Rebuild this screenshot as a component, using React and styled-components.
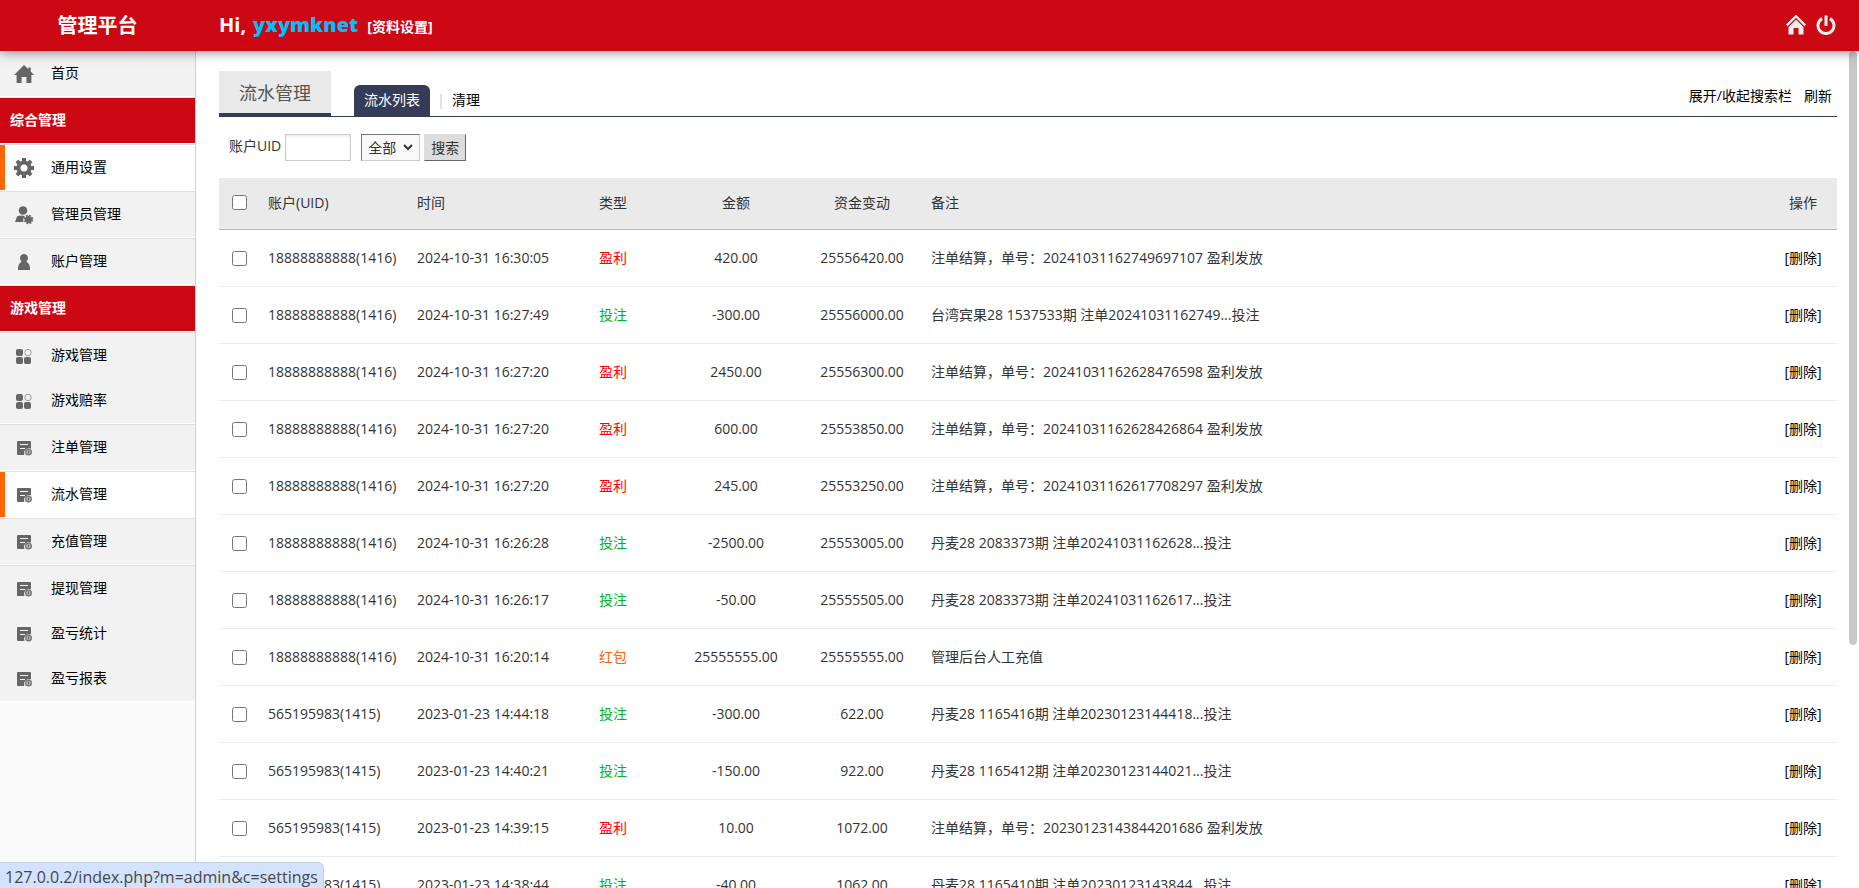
import React, { useState } from 'react';
import styled, { createGlobalStyle, css } from 'styled-components';

const GlobalStyle = createGlobalStyle`
  * {
    box-sizing: border-box;
  }
  body {
    margin: 0;
    background: #fff;
    color: #333;
    font-family: 'Open Sans', 'Noto Sans CJK SC', sans-serif;
    font-size: 14px;
    line-height: 20px;
  }
  a {
    color: #000;
    text-decoration: none;
  }
`;

const StyledPage = styled.div`
  display: flex;
  flex-direction: column;
  height: 100vh;
  overflow: hidden;
`;

const StyledHeader = styled.header`
  position: relative;
  z-index: 10;
  display: flex;
  align-items: center;
  flex-shrink: 0;
  height: 51px;
  padding-right: 23px;
  background: #cb0814;
  box-shadow: 0 0 12px rgba(0, 0, 0, 0.55);
  color: #fff;
  font-weight: bold;
`;

const StyledLogo = styled.div`
  width: 195px;
  font-size: 20px;
  text-align: center;
`;

const StyledGreeting = styled.div`
  display: flex;
  align-items: baseline;
  flex: 1;
  padding-left: 24px;
  font-size: 20px;

  strong {
    margin-left: 7px;
    color: #00bfff;
  }
  a {
    margin-left: 9px;
    color: #fff;
    font-size: 14px;
  }
`;

const StyledTools = styled.div`
  display: flex;
  gap: 10px;
  padding-bottom: 2px;

  a {
    display: block;
    width: 20px;
    height: 20px;
    color: #eee;
  }
`;

const StyledBody = styled.div`
  display: flex;
  flex: 1;
  min-height: 0;
`;

const StyledSidebar = styled.aside`
  flex-shrink: 0;
  width: 196px;
  background: #fafafa;
  border-right: 1px solid #c9d3dc;
`;

const StyledMenu = styled.ul`
  margin: 0;
  padding: 0;
  list-style: none;
`;

const StyledMenuGroup = styled.li`
  background: ${({ $active }) => ($active ? '#fff' : '#f2f2f2')};
  border-top: 1px solid #e0e0e0;
  border-bottom: 1px solid #fff;
  box-shadow: ${({ $active }) => ($active ? 'inset 5px 0 0 #f60' : 'none')};

  &:first-child {
    border-top: 0;
  }
`;

const StyledMenuTitle = styled.div`
  height: 45px;
  padding-left: 10px;
  background: #cb0814;
  color: #fff;
  font-weight: bold;
  line-height: 43px;
`;

const StyledMenuLink = styled.a`
  display: flex;
  align-items: center;
  height: 45px;
  padding-left: 14px;

  svg {
    width: 20px;
    height: 20px;
    margin-right: 17px;
    fill: #666;
  }
  span {
    padding-bottom: 2px;
  }
`;

const StyledMain = styled.main`
  position: relative;
  flex: 1;
  min-width: 0;
  overflow: hidden;
  padding: 20px 22px 0 23px;
`;

const StyledTabBar = styled.div`
  display: flex;
  align-items: flex-end;
  border-bottom: 1px solid #343c58;
`;

const StyledTitle = styled.h1`
  width: 112px;
  height: 45px;
  margin: 0;
  border-bottom: 3px solid #343c58;
  background: #eaeaea;
  color: #555;
  font-size: 18px;
  font-weight: normal;
  line-height: 44px;
  text-align: center;
`;

const StyledTabs = styled.nav`
  display: flex;
  align-items: center;
  flex: 1;
  padding-left: 23px;
`;

const StyledTab = styled.a`
  padding-bottom: 2px;
  line-height: 29px;

  ${({ $current }) =>
    $current
      ? css`
          margin-right: 10px;
          padding-left: 10px;
          padding-right: 10px;
          border-radius: 6px 6px 0 0;
          background: #343c58;
          color: #fff;
        `
      : css`
          &::before {
            content: '';
            display: inline-block;
            width: 2px;
            height: 15px;
            margin-right: 10px;
            background: #e4e0e0;
            vertical-align: middle;
          }
        `}
`;

const StyledActions = styled.div`
  display: flex;
  align-self: center;
  gap: 12px;
  padding: 4px 5px 0 0;
`;

const StyledTextButton = styled.button`
  padding: 0;
  border: 0;
  background: none;
  color: #000;
  font: inherit;
`;

const StyledSearch = styled.form`
  display: flex;
  align-items: center;
  height: 27px;
  margin: 17px 0;
  padding-left: 10px;

  label {
    margin-right: 4px;
    padding-bottom: 4px;
  }
`;

const StyledInput = styled.input`
  width: 66px;
  height: 27px;
  margin-right: 10px;
  border: 1px solid #ccc;
  box-shadow: inset 0 2px 3px #eee;
  font: inherit;
`;

const StyledSelectWrapper = styled.span`
  position: relative;
  display: flex;
  margin-right: 4px;

  svg {
    position: absolute;
    top: 9px;
    right: 7px;
    width: 10px;
    height: 8px;
    pointer-events: none;
  }
`;

const StyledSelect = styled.select`
  appearance: none;
  width: 59px;
  height: 27px;
  padding: 0 6px;
  border: 1px solid;
  border-color: #777 #ccc #ccc #777;
  border-radius: 0;
  background: #f9f9f9;
  color: #333;
  font: inherit;
`;

const StyledSubmit = styled.button`
  width: 42px;
  height: 27px;
  padding: 0;
  border: 1px solid;
  border-color: #ddd #666 #666 #ddd;
  background: #ddd;
  color: #333;
  font: inherit;
`;

const StyledTable = styled.table`
  width: 100%;
  border-collapse: separate;
  border-spacing: 0;
  table-layout: fixed;
`;

const StyledHeadCell = styled.th`
  width: ${({ $width }) => ($width ? `${$width}px` : 'auto')};
  height: 52px;
  padding: 0 10px 2px;
  border-bottom: 1px solid #bbb;
  background: #eaeaea;
  font-weight: normal;
  text-align: ${({ $align }) => $align || 'left'};
`;

const StyledCell = styled.td`
  height: 57px;
  padding: 0 10px;
  border-bottom: 1px solid #ececec;
  color: ${({ $color }) => $color || '#333'};
  text-align: ${({ $align }) => $align || 'left'};
  white-space: nowrap;
`;

const StyledCheckbox = styled.input`
  display: block;
  width: 15px;
  height: 15px;
  margin: 0 0 0 3px;
`;

const StyledScrollThumb = styled.div`
  position: absolute;
  top: 0;
  right: 2px;
  width: 8px;
  height: 71%;
  border-radius: 4px;
  background: #c9c9c9;
`;

const StyledStatus = styled.div`
  position: fixed;
  bottom: 0;
  left: 0;
  z-index: 20;
  height: 26px;
  padding: 0 5px;
  border-top: 1px solid #c8cfdc;
  border-right: 1px solid #c8cfdc;
  border-radius: 0 6px 0 0;
  background: #d3e3fd;
  color: #474747;
  font-size: 16px;
  line-height: 28px;
`;

const icons = {
  home: <path d="M10 1 0 11h2.6v8h5v-6h4.800v6h5v-8H20l-3.300-3.400V3.500h-2.400v1.700z" />,
  gear: (
    <path
      fillRule="evenodd"
      d="M8 0h4v2.700l1.800.8L15.800 1.500 18.500 4.200 16.500 6.200l.8 1.800H20v4h-2.700l-.8 1.800 2 2-2.700 2.700-2-2-1.800.8V20H8v-2.700l-1.800-.8-2 2-2.700-2.700 2-2-.8-1.800H0V8h2.700l.8-1.800-2-2L4.200 1.500l2 2L8 2.700zM10 6.500a3.500 3.500 0 1 0 0 7 3.500 3.500 0 0 0 0-7z"
    />
  ),
  admin: (
    <>
      <circle cx="9" cy="5.500" r="4.300" />
      <path d="M1 17 3 11.500q3-1.500 8-.5-2.500 2-1.500 6z" />
      <circle cx="14.500" cy="14.500" r="3.600" />
      <circle cx="14.500" cy="14.500" r="4" fill="none" stroke="#666" strokeWidth="1.400" strokeDasharray="2 1.140" />
    </>
  ),
  user: (
    <path d="M10 2a4.200 4.200 0 0 1 2.700 7.300Q12 10 13.800 10.800q2 1.200 2.200 5.200v2H4v-2q.2-4 2.200-5.200Q8 10 7.300 9.300A4.200 4.200 0 0 1 10 2z" />
  ),
  blocks: (
    <>
      <rect x="2" y="3" width="7" height="7" rx="2" />
      <rect x="2" y="11" width="7" height="7" rx="2" />
      <rect x="10" y="11" width="7" height="7" rx="2" />
      <circle cx="14" cy="6.500" r="3.200" fill="none" stroke="#999" />
    </>
  ),
  list: (
    <>
      <path
        fillRule="evenodd"
        d="M4 3h12a1 1 0 0 1 1 1v6.500a5 5 0 0 0-6.500 6.500H4a1 1 0 0 1-1-1V4a1 1 0 0 1 1-1zM6 6v1h8V6zM6 10v1h5v-1z"
      />
      <circle cx="14.500" cy="14" r="2.800" fill="#ccc" stroke="#777" strokeWidth="1.400" />
      <path d="M13.800 12.500h1.500v1.700l-.8 1.500h-.7z" />
    </>
  ),
};

const MenuIcon = ({ name }) => (
  <svg viewBox="0 0 20 20" aria-hidden="true">
    {icons[name]}
  </svg>
);

const menu = [
  { links: [['home', '首页']] },
  { title: '综合管理' },
  { links: [['gear', '通用设置']], active: true },
  { links: [['admin', '管理员管理']] },
  { links: [['user', '账户管理']] },
  { title: '游戏管理' },
  { links: [['blocks', '游戏管理'], ['blocks', '游戏赔率']] },
  { links: [['list', '注单管理']] },
  { links: [['list', '流水管理']], active: true },
  { links: [['list', '充值管理']] },
  { links: [['list', '提现管理'], ['list', '盈亏统计'], ['list', '盈亏报表']] },
];

const columns = [
  { label: '账户(UID)', width: 149 },
  { label: '时间', width: 182 },
  { label: '类型', width: 80 },
  { label: '金额', width: 134, align: 'center' },
  { label: '资金变动', width: 118, align: 'center' },
  { label: '备注' },
  { label: '操作', width: 68, align: 'center' },
];

const typeColors = { 盈利: '#f00', 投注: '#00b41e', 红包: '#f60' };

const records = [
  ['18888888888(1416)', '2024-10-31 16:30:05', '盈利', '420.00', '25556420.00', '注单结算，单号：20241031162749697107 盈利发放'],
  ['18888888888(1416)', '2024-10-31 16:27:49', '投注', '-300.00', '25556000.00', '台湾宾果28 1537533期 注单20241031162749...投注'],
  ['18888888888(1416)', '2024-10-31 16:27:20', '盈利', '2450.00', '25556300.00', '注单结算，单号：20241031162628476598 盈利发放'],
  ['18888888888(1416)', '2024-10-31 16:27:20', '盈利', '600.00', '25553850.00', '注单结算，单号：20241031162628426864 盈利发放'],
  ['18888888888(1416)', '2024-10-31 16:27:20', '盈利', '245.00', '25553250.00', '注单结算，单号：20241031162617708297 盈利发放'],
  ['18888888888(1416)', '2024-10-31 16:26:28', '投注', '-2500.00', '25553005.00', '丹麦28 2083373期 注单20241031162628...投注'],
  ['18888888888(1416)', '2024-10-31 16:26:17', '投注', '-50.00', '25555505.00', '丹麦28 2083373期 注单20241031162617...投注'],
  ['18888888888(1416)', '2024-10-31 16:20:14', '红包', '25555555.00', '25555555.00', '管理后台人工充值'],
  ['565195983(1415)', '2023-01-23 14:44:18', '投注', '-300.00', '622.00', '丹麦28 1165416期 注单20230123144418...投注'],
  ['565195983(1415)', '2023-01-23 14:40:21', '投注', '-150.00', '922.00', '丹麦28 1165412期 注单20230123144021...投注'],
  ['565195983(1415)', '2023-01-23 14:39:15', '盈利', '10.00', '1072.00', '注单结算，单号：20230123143844201686 盈利发放'],
  ['565195983(1415)', '2023-01-23 14:38:44', '投注', '-40.00', '1062.00', '丹麦28 1165410期 注单20230123143844...投注'],
];

const Header = () => (
  <StyledHeader>
    <StyledLogo>管理平台</StyledLogo>
    <StyledGreeting>
      <span>Hi,</span>
      <strong>yxymknet</strong>
      <a href="#profile">[资料设置]</a>
    </StyledGreeting>
    <StyledTools>
      <a href="#home" aria-label="首页">
        <svg viewBox="0 0 20 20" fill="currentColor">
          <path d="M10 4.500 2.500 12v7.500h5V13h5v6.500h5V12z" />
          <path d="m.8 10.400 9.200-9.200 9.200 9.200" fill="none" stroke="#cb0814" strokeWidth="4" />
          <path d="m.8 10.400 9.200-9.200 9.200 9.200" fill="none" stroke="currentColor" strokeWidth="2.400" />
        </svg>
      </a>
      <a href="#logout" aria-label="退出">
        <svg viewBox="0 0 20 20" fill="none" stroke="currentColor" strokeWidth="3">
          <path d="M6 3.600a8 8 0 1 0 8 0M10 .5V11" />
        </svg>
      </a>
    </StyledTools>
  </StyledHeader>
);

const Sidebar = () => (
  <StyledSidebar>
    <StyledMenu>
      {menu.map(({ title, links, active }, index) => (
        <StyledMenuGroup key={index} $active={active}>
          {title && <StyledMenuTitle>{title}</StyledMenuTitle>}
          {links &&
            links.map(([icon, label]) => (
              <StyledMenuLink key={label} href="#menu">
                <MenuIcon name={icon} />
                <span>{label}</span>
              </StyledMenuLink>
            ))}
        </StyledMenuGroup>
      ))}
    </StyledMenu>
  </StyledSidebar>
);

const RecordTable = () => {
  const [selected, setSelected] = useState([]);
  const allSelected = selected.length === records.length;

  const toggle = (index) =>
    setSelected(selected.includes(index) ? selected.filter((i) => i !== index) : [...selected, index]);

  return (
    <StyledTable>
      <thead>
        <tr>
          <StyledHeadCell $width={39}>
            <StyledCheckbox
              type="checkbox"
              aria-label="全选"
              checked={allSelected}
              onChange={() => setSelected(allSelected ? [] : records.map((_, i) => i))}
            />
          </StyledHeadCell>
          {columns.map(({ label, width, align }) => (
            <StyledHeadCell key={label} $width={width} $align={align}>
              {label}
            </StyledHeadCell>
          ))}
        </tr>
      </thead>
      <tbody>
        {records.map(([account, time, type, amount, balance, note], index) => (
          <tr key={index}>
            <StyledCell>
              <StyledCheckbox
                type="checkbox"
                aria-label={account}
                checked={selected.includes(index)}
                onChange={() => toggle(index)}
              />
            </StyledCell>
            <StyledCell>{account}</StyledCell>
            <StyledCell>{time}</StyledCell>
            <StyledCell $color={typeColors[type]}>{type}</StyledCell>
            <StyledCell $align="center">{amount}</StyledCell>
            <StyledCell $align="center">{balance}</StyledCell>
            <StyledCell>{note}</StyledCell>
            <StyledCell $align="center">
              <a href="#delete">[删除]</a>
            </StyledCell>
          </tr>
        ))}
      </tbody>
    </StyledTable>
  );
};

const App = () => {
  const [searchOpen, setSearchOpen] = useState(true);

  return (
    <StyledPage>
      <GlobalStyle />
      <Header />
      <StyledBody>
        <Sidebar />
        <StyledMain>
          <StyledTabBar>
            <StyledTitle>流水管理</StyledTitle>
            <StyledTabs>
              <StyledTab href="#list" $current>
                流水列表
              </StyledTab>
              <StyledTab href="#clear">清理</StyledTab>
            </StyledTabs>
            <StyledActions>
              <StyledTextButton type="button" onClick={() => setSearchOpen(!searchOpen)}>
                展开/收起搜索栏
              </StyledTextButton>
              <StyledTextButton type="button">刷新</StyledTextButton>
            </StyledActions>
          </StyledTabBar>
          {searchOpen && (
            <StyledSearch onSubmit={(e) => e.preventDefault()}>
              <label htmlFor="uid">账户UID</label>
              <StyledInput id="uid" type="text" />
              <StyledSelectWrapper>
                <StyledSelect aria-label="类型" defaultValue="全部">
                  <option>全部</option>
                  <option>盈利</option>
                  <option>投注</option>
                  <option>红包</option>
                </StyledSelect>
                <svg viewBox="0 0 10 8" fill="none" stroke="#333" strokeWidth="2">
                  <path d="m1 2 4 4 4-4" />
                </svg>
              </StyledSelectWrapper>
              <StyledSubmit type="submit">搜索</StyledSubmit>
            </StyledSearch>
          )}
          <RecordTable />
          <StyledScrollThumb />
        </StyledMain>
      </StyledBody>
      <StyledStatus>127.0.0.2/index.php?m=admin&amp;c=settings</StyledStatus>
    </StyledPage>
  );
};

export default App;
